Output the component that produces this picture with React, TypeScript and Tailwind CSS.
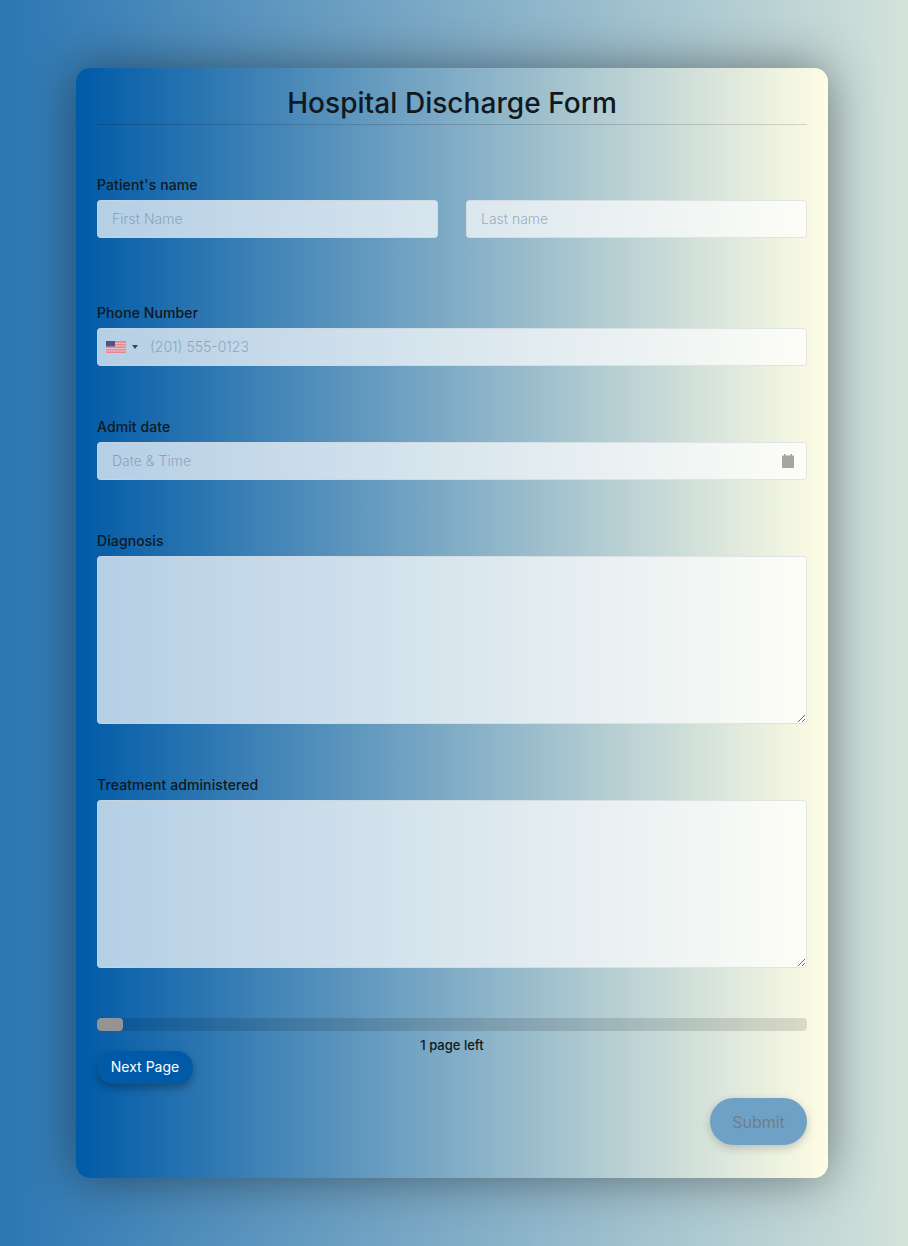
import { ReactNode } from "react";

const fieldClass =
  "block w-full rounded-[4px] border border-[#ced4da]/60 bg-white/70 text-[14px] font-light text-[#495057] outline-none placeholder:text-[#6c7f9c]/60";

function Label({ children }: { children: ReactNode }) {
  return (
    <label className="block h-[22px] text-[14px] leading-[14px] font-medium tracking-[0.1px] text-[#101820]">
      {children}
    </label>
  );
}

function UsFlag() {
  return (
    <svg width="20" height="12" viewBox="0 0 20 12" className="shrink-0">
      <rect width="20" height="12" fill="#e8868f" />
      <rect width="20" height="1" y="1.8" fill="#e9c4c9" />
      <rect width="20" height="1" y="4.4" fill="#e9c4c9" />
      <rect width="20" height="1" y="7" fill="#e9c4c9" />
      <rect width="20" height="1" y="9.4" fill="#e9c4c9" />
      <rect width="9" height="5.5" fill="#4f5586" />
    </svg>
  );
}

function CalendarIcon() {
  return (
    <svg width="12" height="14" viewBox="0 0 12 14" fill="#a4a6a2">
      <path d="M2 0h1.6v1.5h4.8V0H10v1.5h1a1 1 0 0 1 1 1V13a1 1 0 0 1-1 1H1a1 1 0 0 1-1-1V2.5a1 1 0 0 1 1-1h1z" />
    </svg>
  );
}

export default function App() {
  return (
    <div
      className="min-h-[1246px] pl-[76px] pt-[68px] bg-linear-to-r/srgb from-[#2b76b3] to-[#d4e2da]"
      style={{ fontFamily: '"Inter", "Noto Sans", sans-serif' }}
    >
      <div className="h-[1110px] w-[752px] rounded-[14px] bg-linear-to-r/srgb from-[#005aa7] to-[#fffde4] px-[21px] shadow-[0_0_50px_rgba(0,0,0,0.45)]">
        <div className="h-[57px] border-b border-black/15 text-center">
          <h1 className="pt-[16px] text-[28px] leading-[38px] font-medium tracking-[0.05px] text-[#101820]">
            Hospital Discharge Form
          </h1>
        </div>

        <div className="pt-[53px]">
          <Label>Patient's name</Label>
          <div className="flex gap-[28px]">
            <input placeholder="First Name" className={`${fieldClass} h-[38px] px-[14px] pb-[2px]`} />
            <input placeholder="Last name" className={`${fieldClass} h-[38px] px-[14px] pb-[2px]`} />
          </div>
        </div>

        <div className="pt-[68px]">
          <Label>Phone Number</Label>
          <div className={`${fieldClass} flex h-[38px] items-center pl-[8px]`}>
            <UsFlag />
            <span className="ml-[6px] h-0 w-0 border-x-[3px] border-t-[4px] border-x-transparent border-t-[#444]" />
            <input
              placeholder="(201) 555-0123"
              className="ml-[12px] flex-1 bg-transparent pb-[2px] outline-none placeholder:text-[#6c7f9c]/60"
            />
          </div>
        </div>

        <div className="pt-[54px]">
          <Label>Admit date</Label>
          <div className={`${fieldClass} flex h-[38px] items-center pl-[14px] pr-[12px]`}>
            <input
              placeholder="Date & Time"
              className="flex-1 bg-transparent pb-[2px] outline-none placeholder:text-[#6c7f9c]/60"
            />
            <CalendarIcon />
          </div>
        </div>

        <div className="pt-[54px]">
          <Label>Diagnosis</Label>
          <textarea className={`${fieldClass} h-[168px] p-[8px]`} />
        </div>

        <div className="pt-[54px]">
          <Label>Treatment administered</Label>
          <textarea className={`${fieldClass} h-[168px] p-[8px]`} />
        </div>

        <div className="pt-[50px]">
          <div className="h-[13px] overflow-hidden rounded-[4px] bg-black/[0.12]">
            <div className="h-full w-[26px] rounded-[4px] bg-[#949494]" />
          </div>
          <p className="mt-[6px] h-[14px] text-center text-[13px] leading-[16px] font-medium text-[#101820]">
            1 page left
          </p>
        </div>

        <button className="block h-[33px] w-[96px] rounded-full bg-[#005aa7] pb-[2px] text-[14px] font-normal text-white shadow-[0_4px_8px_rgba(0,0,0,0.3)]">
          Next Page
        </button>

        <div className="mt-[14px] flex justify-end">
          <button className="h-[47px] w-[97px] rounded-full bg-[#6fa1c6] text-[16px] text-[#6e7f88] shadow-[0_3px_10px_rgba(0,0,0,0.2)]">
            Submit
          </button>
        </div>
      </div>
    </div>
  );
}
